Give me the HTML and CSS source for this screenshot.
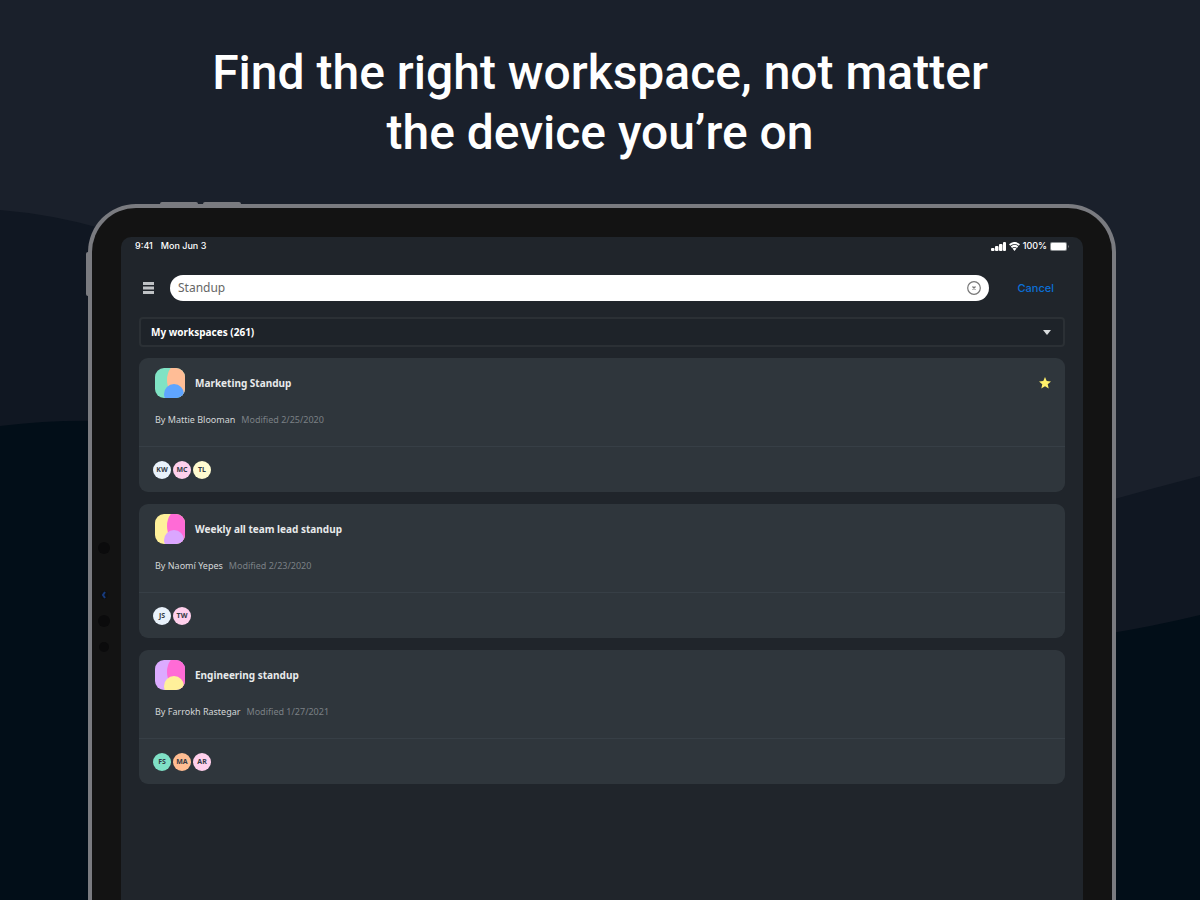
FILE: index.html
```html
<!DOCTYPE html>
<html lang="en">
<head>
<meta charset="utf-8">
<meta name="viewport" content="width=device-width, initial-scale=1">
<title>Find the right workspace</title>
<link rel="stylesheet" href="styles.css">
</head>
<body>
<svg class="backdrop" viewBox="0 0 1200 900" preserveAspectRatio="none" aria-hidden="true">
  <path fill="#101722" d="M0 210Q50 214 100 228L600 400L1100 503Q1150 489 1200 476V900H0Z"/>
  <path fill="#020e18" d="M0 426Q50 420 100 421L600 640L1100 635Q1155 626 1200 615V900H0Z"/>
</svg>

<header class="hero">
  <h1 class="hero-title">Find the right workspace, not matter<br>the device you’re on</h1>
</header>

<main class="tablet">
  <span class="hw hw-top-a"></span>
  <span class="hw hw-top-b"></span>
  <span class="hw hw-side"></span>
  <svg class="sensors" viewBox="0 0 14 120" aria-hidden="true">
    <circle cx="7" cy="10" r="6" fill="#0b0b0c"/>
    <circle cx="7" cy="57" r="4" fill="#0e1013"/>
    <path d="M8 54L6 57L8 60" fill="none" stroke="#173a7c" stroke-width="2"/>
    <circle cx="7" cy="83" r="6" fill="#0b0b0c"/>
    <circle cx="7" cy="109" r="5" fill="#0b0b0c"/>
  </svg>

  <div class="screen">
    <div class="status">
      <span class="status-group"><span>9:41</span><span>Mon Jun 3</span></span>
      <span class="status-group status-right">
        <svg width="15" height="9" viewBox="0 0 15 9" aria-hidden="true" fill="#fff"><rect x="0" y="6" width="3.500" height="3" rx="1"/><rect x="4" y="4" width="3.500" height="5" rx="1"/><rect x="8" y="2" width="3.500" height="7" rx="1"/><rect x="12" y="0" width="3" height="9" rx="1"/></svg>
        <svg width="11" height="9" viewBox="0 0 11 9" aria-hidden="true" fill="none" stroke="#fff" stroke-width="2"><path d="M.6 3Q5.500-1 10.400 3M2.400 5.200Q5.500 2.600 8.600 5.200"/><path d="M5.500 9L3.500 6.500Q5.500 5 7.500 6.500Z" fill="#fff" stroke="none"/></svg>
        <span>100%</span>
        <svg width="19" height="9" viewBox="0 0 19 9" aria-hidden="true"><rect width="17" height="9" rx="2" fill="#8b8f92"/><rect x="1" y="1" width="15" height="7" rx="1" fill="#fff"/><path d="M18 3Q19.500 4.500 18 6Z" fill="#8b8f92"/></svg>
      </span>
    </div>

    <form class="search">
      <button class="icon-btn" type="button" aria-label="Menu">
        <svg width="11" height="12" viewBox="0 0 11 12" aria-hidden="true"><path d="M0 1.500H11M0 6H11M0 10.500H11" stroke="#bfc2c5" stroke-width="3"/></svg>
      </button>
      <div class="field">
        <input class="field-input" type="text" value="Standup" aria-label="Search workspaces">
        <button class="icon-btn" type="button" aria-label="Clear search">
          <svg width="14" height="14" viewBox="0 0 14 14" aria-hidden="true" fill="none" stroke="#777"><circle cx="7" cy="7" r="6.300" stroke-width="1.200"/><path d="M5.500 5.500L8.500 8.500M8.500 5.500L5.500 8.500" stroke-width="1.300"/></svg>
        </button>
      </div>
      <button class="cancel" type="button">Cancel</button>
    </form>

    <div class="filter">
      <select class="filter-select" aria-label="Workspace filter"><option>My workspaces (261)</option></select>
      <svg class="filter-caret" width="8" height="5" viewBox="0 0 8 5" aria-hidden="true"><path d="M0 0H8L4 5Z" fill="#d9dcde"/></svg>
    </div>

    <section class="cards">
      <article class="card">
        <div class="card-body">
          <div class="card-head">
            <svg class="logo" viewBox="0 0 30 30" aria-hidden="true"><rect width="30" height="30" fill="#80e3c4"/><ellipse cx="25" cy="12" rx="13" ry="17" fill="#ffbd96"/><ellipse cx="19" cy="26" rx="10" ry="10" fill="#5fa5ff"/></svg>
            <h2 class="card-title">Marketing Standup</h2>
            <svg class="star" width="12" height="12" viewBox="0 0 12 12" role="img" aria-label="Starred"><path fill="#fff06a" d="M6 0L7.700 4L12 4.400L8.700 7.200L9.700 11.500L6 9.200L2.300 11.500L3.300 7.200L0 4.400L4.300 4Z"/></svg>
          </div>
          <p class="meta"><span class="author">By Mattie Blooman</span><span>Modified 2/25/2020</span></p>
        </div>
        <div class="people"><span class="avatar ice">KW</span><span class="avatar pink">MC</span><span class="avatar cream">TL</span></div>
      </article>

      <article class="card">
        <div class="card-body">
          <div class="card-head">
            <svg class="logo" viewBox="0 0 30 30" aria-hidden="true"><rect width="30" height="30" fill="#fff09a"/><ellipse cx="25" cy="12" rx="13" ry="17" fill="#ff6bd6"/><ellipse cx="19" cy="26" rx="10" ry="10" fill="#dba6ff"/></svg>
            <h2 class="card-title">Weekly all team lead standup</h2>
          </div>
          <p class="meta"><span class="author">By Naomí Yepes</span><span>Modified 2/23/2020</span></p>
        </div>
        <div class="people"><span class="avatar ice">JS</span><span class="avatar pink">TW</span></div>
      </article>

      <article class="card">
        <div class="card-body">
          <div class="card-head">
            <svg class="logo" viewBox="0 0 30 30" aria-hidden="true"><rect width="30" height="30" fill="#dcabff"/><ellipse cx="25" cy="12" rx="13" ry="17" fill="#ff6bd6"/><ellipse cx="19" cy="26" rx="10" ry="10" fill="#fff09a"/></svg>
            <h2 class="card-title">Engineering standup</h2>
          </div>
          <p class="meta"><span class="author">By Farrokh Rastegar</span><span>Modified 1/27/2021</span></p>
        </div>
        <div class="people"><span class="avatar mint">FS</span><span class="avatar peach">MA</span><span class="avatar pink">AR</span></div>
      </article>
    </section>
  </div>
</main>
</body>
</html>
```
FILE: styles.css
```css
* { box-sizing: border-box; }

body {
  margin: 0;
  min-height: 100vh;
  display: flex;
  flex-direction: column;
  position: relative;
  background: #1a202b;
  color: #fff;
  font-family: "Noto Sans", sans-serif;
}

button, input, select { font: inherit; color: inherit; }

.backdrop {
  position: absolute;
  inset: 0;
  width: 100%;
  height: 100%;
  z-index: -1;
}

.hero { padding: 43px 24px 41px; text-align: center; }

.hero-title {
  margin: 0;
  font: 500 48px/60px Roboto, sans-serif;
}

.tablet {
  flex: 1;
  display: flex;
  position: relative;
  margin: 0 84px 0 88px;
  padding: 29px 29px 0;
  border: 4px solid #7a7b80;
  border-bottom: 0;
  border-radius: 48px 48px 0 0;
  background: #131313;
}

.hw { position: absolute; background: #7a7b80; }
.hw-top-a, .hw-top-b { top: -6px; width: 38px; height: 3px; border-radius: 2px 2px 0 0; }
.hw-top-a { left: 68px; }
.hw-top-b { left: 111px; }
.hw-side { top: 44px; left: -6px; width: 3px; height: 44px; border-radius: 2px 0 0 2px; }

.sensors { position: absolute; left: 5px; top: 330px; width: 14px; height: 120px; }

.screen {
  flex: 1;
  min-width: 0;
  padding: 0 18px 16px;
  border-radius: 10px 10px 0 0;
  background: #20252b;
}

.status {
  display: flex;
  justify-content: space-between;
  margin: 0 -4px;
  padding-top: 2px;
  font: 500 9px/14px Inter, sans-serif;
}
.status-group { display: flex; align-items: center; gap: 8px; }
.status-right { gap: 3px; }

.search {
  display: flex;
  align-items: center;
  gap: 16px;
  padding: 22px 11px 16px 4px;
}

.icon-btn {
  display: flex;
  padding: 0;
  border: 0;
  background: none;
}

.field {
  flex: 1;
  display: flex;
  align-items: center;
  height: 26px;
  padding: 0 8px;
  border-radius: 13px;
  background: #fff;
}
.field-input {
  flex: 1;
  min-width: 0;
  padding: 0;
  border: 0;
  outline: 0;
  background: none;
  color: #666;
  font-size: 12px;
  line-height: 20px;
}

.cancel {
  margin-left: 12px;
  padding: 0;
  border: 0;
  background: none;
  color: #0b6fd6;
  font: 500 11px/16px Inter, sans-serif;
}

.filter { position: relative; }
.filter-select {
  display: block;
  width: 100%;
  height: 30px;
  padding: 0 10px;
  appearance: none;
  border: 2px solid #2b3035;
  border-radius: 4px;
  background: #1e2329;
  font-size: 10px;
  font-weight: 700;
}
.filter-caret { position: absolute; right: 14px; top: 13px; pointer-events: none; }

.cards {
  display: grid;
  gap: 12px;
  padding-top: 11px;
}

.card { border-radius: 9px; background: #2f363c; }

.card-body {
  padding: 10px 14px 20px 16px;
  border-bottom: 1px solid #373f46;
}
.card-head { display: flex; align-items: center; gap: 10px; }
.logo { width: 30px; height: 30px; border-radius: 9px; }
.card-title { margin: 0; font-size: 10px; font-weight: 700; line-height: 16px; color: #e8eaeb; }
.star { margin-left: auto; }

.meta {
  display: flex;
  gap: 6px;
  margin: 16px 0 0;
  font-size: 9px;
  line-height: 12px;
  color: #7b8085;
}
.author { color: #d4d6d8; }

.people {
  display: flex;
  gap: 2px;
  padding: 14px 14px 13px;
}
.avatar {
  width: 18px;
  height: 18px;
  border-radius: 50%;
  color: #333a44;
  font-size: 7px;
  font-weight: 700;
  line-height: 18px;
  text-align: center;
}
.ice { background: #e9f2fb; }
.pink { background: #ffd0ec; }
.cream { background: #fffbd0; }
.mint { background: #7fe0c6; }
.peach { background: #ffbd92; }
```
